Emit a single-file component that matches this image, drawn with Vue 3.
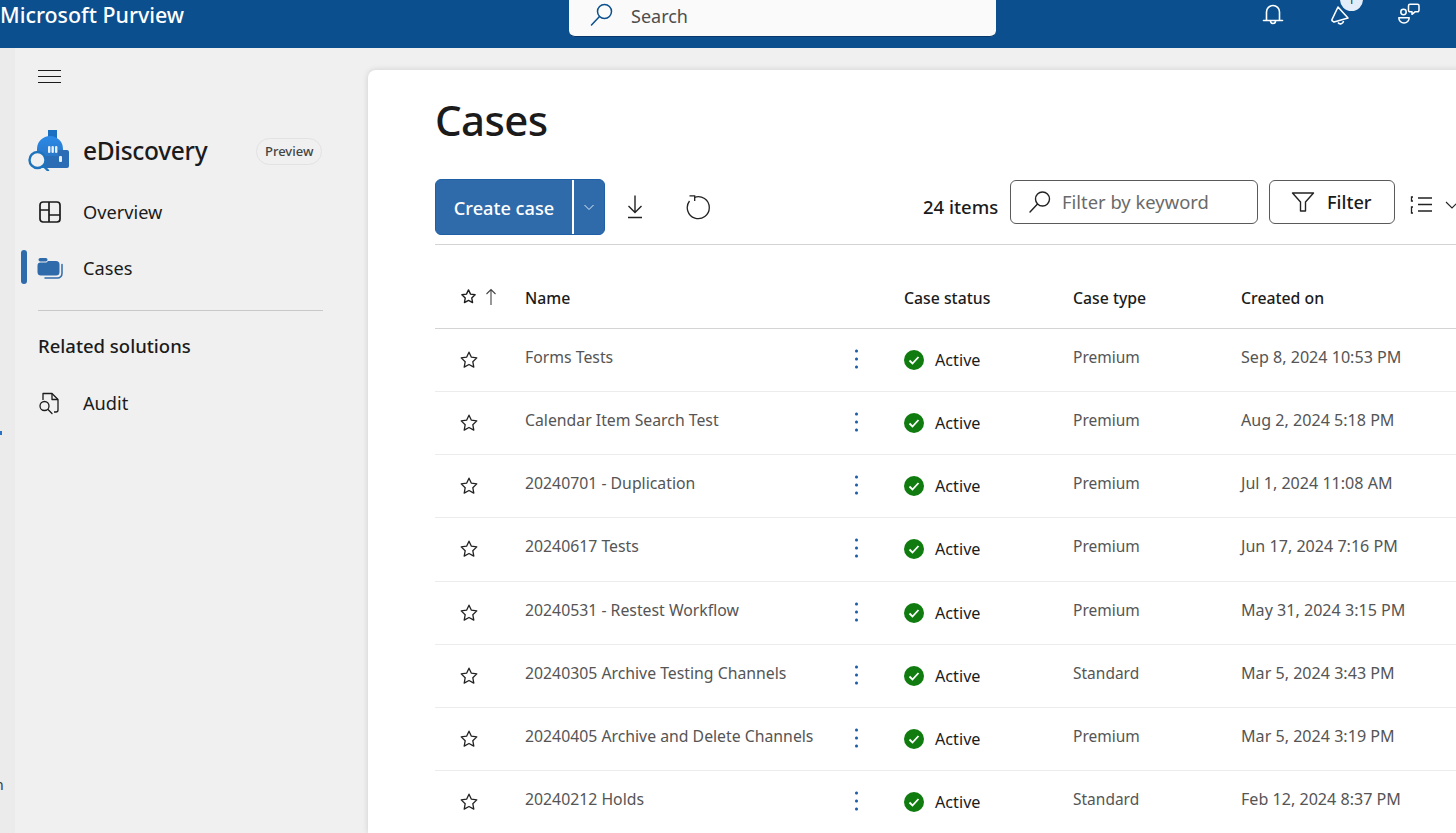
<script setup>
const rows = [
  ['Forms Tests', 'Premium', 'Sep 8, 2024 10:53 PM'],
  ['Calendar Item Search Test', 'Premium', 'Aug 2, 2024 5:18 PM'],
  ['20240701 - Duplication', 'Premium', 'Jul 1, 2024 11:08 AM'],
  ['20240617 Tests', 'Premium', 'Jun 17, 2024 7:16 PM'],
  ['20240531 - Restest Workflow', 'Premium', 'May 31, 2024 3:15 PM'],
  ['20240305 Archive Testing Channels', 'Standard', 'Mar 5, 2024 3:43 PM'],
  ['20240405 Archive and Delete Channels', 'Premium', 'Mar 5, 2024 3:19 PM'],
  ['20240212 Holds', 'Standard', 'Feb 12, 2024 8:37 PM'],
]
const star = 'M10 2.2l2.4 5 5.4.7-4 3.8 1 5.4-4.8-2.6-4.8 2.6 1-5.4-4-3.8 5.4-.7z'
</script>

<template>
  <div class="page">
    <header class="top">
      <div class="brand">Microsoft Purview</div>
      <div class="search">
        <svg class="search-ico" width="24" height="24" viewBox="0 0 24 24" fill="none" stroke="#0b4f8e" stroke-width="1.5"><circle cx="14.5" cy="8.5" r="7"/><path d="M9.5 13.5L1.5 22" stroke-linecap="round"/></svg>
        <span>Search</span>
      </div>
      <div class="top-icons">
        <svg width="22" height="24" viewBox="0 0 22 24" fill="none" stroke="#fff" stroke-width="1.6"><path d="M4.500 18V10a6.500 6.500 0 0113 0v8"/><path d="M1.500 18.500h19" stroke-linecap="round"/><path d="M8.500 19a2.500 2.500 0 005 0"/></svg>
        <div class="mega">
          <svg width="26" height="26" viewBox="0 0 26 26" fill="none" stroke="#fff" stroke-width="1.6" stroke-linejoin="round"><path d="M9 5L3 17.500a1.200 1.200 0 00.6 1.600L5 20l14-4z"/><path d="M9 20.500a3 3 0 005.500-1.500"/></svg>
          <span class="badge">1</span>
        </div>
        <svg class="people" width="24" height="24" viewBox="0 0 24 24" fill="none" stroke="#fff" stroke-width="1.5" stroke-linejoin="round"><circle cx="5.500" cy="10" r="2.700"/><path d="M.8 15.800h10.400a5.200 5.200 0 01-10.400 0z"/><path d="M12 2.200h7.500a1.500 1.500 0 011.500 1.500v4.600a1.500 1.500 0 01-1.500 1.500h-2.500l-3 2.500v-2.500h-2a1.500 1.500 0 01-1.500-1.500V3.700A1.500 1.500 0 0112 2.200z"/></svg>
      </div>
    </header>

    <div class="body">
      <div class="rail">
        <i class="tick"></i>
        <span class="rail-letter">n</span>
      </div>
      <aside class="side">
        <div class="burger"><i></i><i></i><i></i></div>
        <div class="sol">
          <svg width="42" height="42" viewBox="0 0 42 42">
            <defs>
              <linearGradient id="domeFill" x1="0" y1="0" x2="0" y2="1">
                <stop offset="0" stop-color="#2a8ae8"/>
                <stop offset="1" stop-color="#2a6db5"/>
              </linearGradient>
            </defs>
            <rect x="20" y="1" width="9" height="8" fill="#1b6fc0"/>
            <path d="M9 20a13 13 0 0126 0v19H14V28H9z" fill="url(#domeFill)"/>
            <path d="M30 21h9a2 2 0 012 2v14a2 2 0 01-2 2H18V27h12z" fill="#2a6db5"/>
            <rect x="20" y="17" width="2.400" height="7" rx="1.100" fill="#e6effa"/>
            <rect x="23.500" y="17" width="2.400" height="7" rx="1.100" fill="#e6effa"/>
            <rect x="27" y="17" width="2.400" height="7" rx="1.100" fill="#e6effa"/>
            <rect x="31" y="27" width="3" height="6" rx="1" fill="#e6effa"/>
            <circle cx="9.500" cy="31" r="8" fill="#f0f0f0" stroke="#1e73bd" stroke-width="2.400"/>
            <path d="M15.500 37l4.500 4.500" stroke="#1e73bd" stroke-width="2.400" stroke-linecap="round"/>
          </svg>
          <span class="sol-name">eDiscovery</span>
          <span class="pill">Preview</span>
        </div>
        <nav class="nav">
          <div class="nav-item">
            <svg width="24" height="24" viewBox="0 0 24 24" fill="none" stroke="#1b1b1b" stroke-width="1.700"><rect x="2" y="2" width="20" height="20" rx="3"/><path d="M11 2v20M2 10h9M11 15h11"/></svg>
            <span>Overview</span>
          </div>
          <div class="nav-item active">
            <svg width="26" height="24" viewBox="0 0 26 24" fill="none"><rect x="1.500" y="2" width="9" height="3.500" rx="1.700" fill="#2f6bab"/><path d="M.5 9.500A3 3 0 013.500 6.500h6L11 5h8a3.500 3.500 0 013.500 3.500V16a3.500 3.500 0 01-3.500 3.500H4A3.500 3.500 0 01.5 16z" fill="#2f6bab"/><path d="M25 8.500V17.500a4.500 4.500 0 01-4.500 4.500H8" stroke="#2f6bab" stroke-width="1.500" stroke-linecap="round"/></svg>
            <span>Cases</span>
          </div>
        </nav>
        <div class="side-rule"></div>
        <div class="related">Related solutions</div>
        <div class="nav-item audit">
          <svg width="24" height="24" viewBox="0 0 24 24" fill="none" stroke="#1b1b1b" stroke-width="1.300" stroke-linejoin="round"><path d="M5 9V2.500h9l6 6V19a2 2 0 01-2 2h-2"/><path d="M14 2.500v6h6"/><circle cx="6.500" cy="15" r="4.500"/><path d="M10 18.500l4 4" stroke-linecap="round"/></svg>
          <span>Audit</span>
        </div>
      </aside>

      <main class="card">
        <h1>Cases</h1>
        <div class="toolbar">
          <div class="create">
            <span class="create-label">Create case</span>
            <span class="create-drop">
              <svg width="12" height="12" viewBox="0 0 12 12" fill="none" stroke="#dfe9f5" stroke-width="1"><path d="M1.500 4l4.500 4.500L10.500 4"/></svg>
            </span>
          </div>
          <svg class="tool-down" width="20" height="26" viewBox="0 0 20 26" fill="none" stroke="#222" stroke-width="1.400"><path d="M10 1.500v17M3.500 12l6.500 6.500 6.500-6.500M3 23.500h14"/></svg>
          <svg class="tool-refresh" width="26" height="26" viewBox="0 0 26 26" fill="none" stroke="#222" stroke-width="1.300"><path d="M8.500 3.300a11 11 0 11-5 3.700"/><path d="M3.500 1.800h5.200v5.200" /></svg>
          <span class="count">24 items</span>
          <div class="kw">
            <svg width="24" height="24" viewBox="0 0 24 24" fill="none" stroke="#222" stroke-width="1.400"><circle cx="14.500" cy="9" r="7"/><path d="M9.500 14L2 22" stroke-linecap="round"/></svg>
            <span>Filter by keyword</span>
          </div>
          <div class="filter">
            <svg width="24" height="22" viewBox="0 0 24 22" fill="none" stroke="#222" stroke-width="1.400" stroke-linejoin="round"><path d="M1.500 2h21l-8 9v9h-5v-9z"/></svg>
            <span>Filter</span>
          </div>
          <svg class="viewlist" width="24" height="20" viewBox="0 0 24 20" fill="none" stroke="#222" stroke-width="1.300"><path d="M8 3h14M8 9.500h14M8 16h14M3 2H1.500v4H3M3 12H1.500v6H3"/></svg>
          <svg class="viewchev" width="14" height="14" viewBox="0 0 14 14" fill="none" stroke="#222" stroke-width="1.100"><path d="M1 4l6 6 6-6"/></svg>
        </div>

        <div class="row head">
          <div class="c-star">
            <svg width="17" height="17" viewBox="0 0 20 20" fill="none" stroke="#1d1d1d" stroke-width="1.600" stroke-linejoin="round"><path :d="star"/></svg>
            <svg width="12" height="18" viewBox="0 0 12 18" fill="none" stroke="#444" stroke-width="1.100"><path d="M6 17V1.500M1.500 6L6 1.500 10.500 6"/></svg>
          </div>
          <div class="c-name strong">Name</div>
          <div>Case status</div>
          <div>Case type</div>
          <div>Created on</div>
        </div>

        <div v-for="r in rows" :key="r[0]" class="row">
          <div class="c-star">
            <svg width="20" height="20" viewBox="0 0 20 20" fill="none" stroke="#222" stroke-width="1.300" stroke-linejoin="round"><path :d="star"/></svg>
          </div>
          <div class="c-name">
            <span class="lift">{{ r[0] }}</span>
            <span class="dots"><i></i><i></i><i></i></span>
          </div>
          <div class="status">
            <svg width="20" height="20" viewBox="0 0 20 20"><circle cx="10" cy="10" r="10" fill="#107c10"/><path d="M5.500 10.500l3 3 6-6.500" fill="none" stroke="#fff" stroke-width="1.800"/></svg>
            <span>Active</span>
          </div>
          <div class="lift type">{{ r[1] }}</div>
          <div class="lift date">{{ r[2] }}</div>
        </div>
      </main>
    </div>
  </div>
</template>

<style>
html, body { margin: 0; overflow: hidden; }
</style>

<style scoped>
.page { width: 1456px; height: 833px; overflow: hidden; background: #f0f0f0; font-family: "Noto Sans", "Open Sans", sans-serif; color: #1b1b1b; display: flex; flex-direction: column; }
.top { height: 48px; flex: none; background: #0b4f8e; display: flex; align-items: flex-start; position: relative; }
.brand { width: 569px; color: #fff; font-size: 21.400px; font-weight: 500; line-height: 30px; flex: none; }
.search { width: 427px; height: 37px; background: #fafafa; border-radius: 0 0 6px 6px; border-bottom: 1px solid #06386b; box-sizing: border-box; display: flex; align-items: center; padding-left: 21px; gap: 17px; color: #4d4d4d; font-size: 18px; flex: none; }
.search-ico { flex: none; margin-top: -7px; }
.search span { margin-top: -4px; }
.top-icons { margin-left: 266px; display: flex; gap: 45px; align-items: flex-start; padding-top: 2px; }
.people { margin-left: -2px; }
.mega { position: relative; width: 26px; height: 26px; }
.badge { position: absolute; left: 11px; top: -14px; width: 23px; height: 23px; border-radius: 50%; background: #e3edf9; color: #222; font-size: 11px; line-height: 23px; text-align: center; overflow: hidden; }
.body { flex: 1; display: flex; min-height: 0; }
.rail { width: 15px; flex: none; background: #ebebeb; position: relative; overflow: hidden; }
.tick { position: absolute; left: 0; top: 383px; width: 2px; height: 4px; background: #2c72c0; }
.rail-letter { position: absolute; left: -5px; top: 727px; font-size: 14px; line-height: 20px; color: #333; }
.side { width: 353px; flex: none; box-sizing: border-box; padding: 0 45px 0 23px; }
.burger { width: 23px; margin-top: 22px; display: flex; flex-direction: column; gap: 5px; }
.burger i { display: block; height: 1px; background: #1b1b1b; }
.sol { display: flex; align-items: center; margin: 46px 0 0 -10px; height: 42px; }
.sol-name { font-size: 24.500px; font-weight: 500; margin-left: 13px; letter-spacing: -.3px; width: 173px; color: #1b1b1b; flex: none; }
.pill { border: 1.500px solid #e2e2e2; border-radius: 14px; font-size: 13px; padding: 3px 8px; color: #444; font-weight: 500; line-height: 19px; white-space: nowrap; position: relative; top: 1px; }
.nav { margin-top: 13px; }
.nav-item { display: flex; align-items: center; height: 56px; font-size: 18.200px; position: relative; }
.nav-item svg { flex: none; margin-right: 21px; }
.nav-item.active svg { margin-right: 20px; margin-left: -1px; }
.nav-item.active::before { content: ""; position: absolute; left: -17px; top: 10px; width: 5.500px; height: 34px; background: #2f6bab; border-radius: 3px; }
.side-rule { height: 1px; background: #c9c9c9; margin-top: 14px; }
.related { font-size: 18.500px; font-weight: 500; margin-top: 22px; line-height: 26px; }
.audit { margin-top: 19px; height: 50px; }
.card { width: 1200px; flex: none; margin-top: 22px; background: #fff; border-radius: 8px 8px 0 0; box-shadow: 0 0 6px rgba(0,0,0,.14); padding-left: 67px; box-sizing: border-box; }
h1 { margin: 21px 0 0; font-size: 42px; font-weight: 500; line-height: 58px; letter-spacing: -.6px; color: #1b1b1b; }
.toolbar { display: flex; align-items: center; width: 1021px; height: 67px; box-sizing: border-box; margin-top: 29px; padding-bottom: 9px; border-bottom: 1px solid #d4d4d4; position: relative; }
.create { width: 170px; height: 56px; background: #2f6bab; border: 1px solid #1f5fa6; box-sizing: border-box; border-radius: 6px; display: flex; color: #fff; font-size: 18.200px; font-weight: 500; flex: none; }
.create-label { width: 138px; text-align: center; line-height: 56px; border-right: 2px solid #fff; flex: none; box-sizing: border-box; white-space: nowrap; }
.create-drop { flex: 1; display: flex; align-items: center; justify-content: center; }
.tool-down { margin-left: 20px; flex: none; }
.tool-refresh { margin-left: 41px; flex: none; }
.count { margin-left: 211px; font-size: 18.500px; font-weight: 500; white-space: nowrap; width: 87px; flex: none; }
.kw { flex: none; width: 248px; height: 44px; margin-top: -10px; border: 1.500px solid #5a5a5a; box-sizing: border-box; border-radius: 6px; display: flex; align-items: center; padding-left: 17px; gap: 10px; color: #6a6a6a; font-size: 18.400px; white-space: nowrap; }
.filter { flex: none; width: 126px; height: 44px; margin-top: -10px; margin-left: 11px; border: 1.500px solid #5a5a5a; box-sizing: border-box; border-radius: 6px; display: flex; align-items: center; padding-left: 21px; gap: 12px; font-size: 18.200px; font-weight: 500; }
.viewlist { flex: none; margin-left: 15px; margin-top: -4px; }
.viewchev { flex: none; margin-left: 11px; margin-top: -4px; }
.row { display: grid; grid-template-columns: 90px 379px 169px 168px 215px; width: 1021px; height: 63.150px; align-items: center; border-bottom: 1px solid #ececec; box-sizing: border-box; color: #555; font-size: 15.800px; white-space: nowrap; }
.head { height: 84px; border-bottom: 1px solid #d4d4d4; color: #1b1b1b; font-weight: 500; padding-top: 23px; }
.c-star { display: flex; align-items: center; gap: 8px; padding-left: 24px; }
.head .c-star { padding-left: 25px; margin-top: -3px; }
.c-name { position: relative; display: flex; align-items: center; }
.lift { position: relative; top: -3px; }
.type { font-size: 15.500px; }
.date { font-size: 16.100px; }
.dots { position: absolute; left: 330px; top: 50%; transform: translateY(-50%); display: flex; flex-direction: column; gap: 5px; margin-top: -1px; }
.dots i { display: block; width: 2.500px; height: 3px; border-radius: 50%; background: #1a5fa8; }
.status { display: flex; align-items: center; gap: 11px; color: #1b1b1b; font-size: 16.200px; }
</style>
